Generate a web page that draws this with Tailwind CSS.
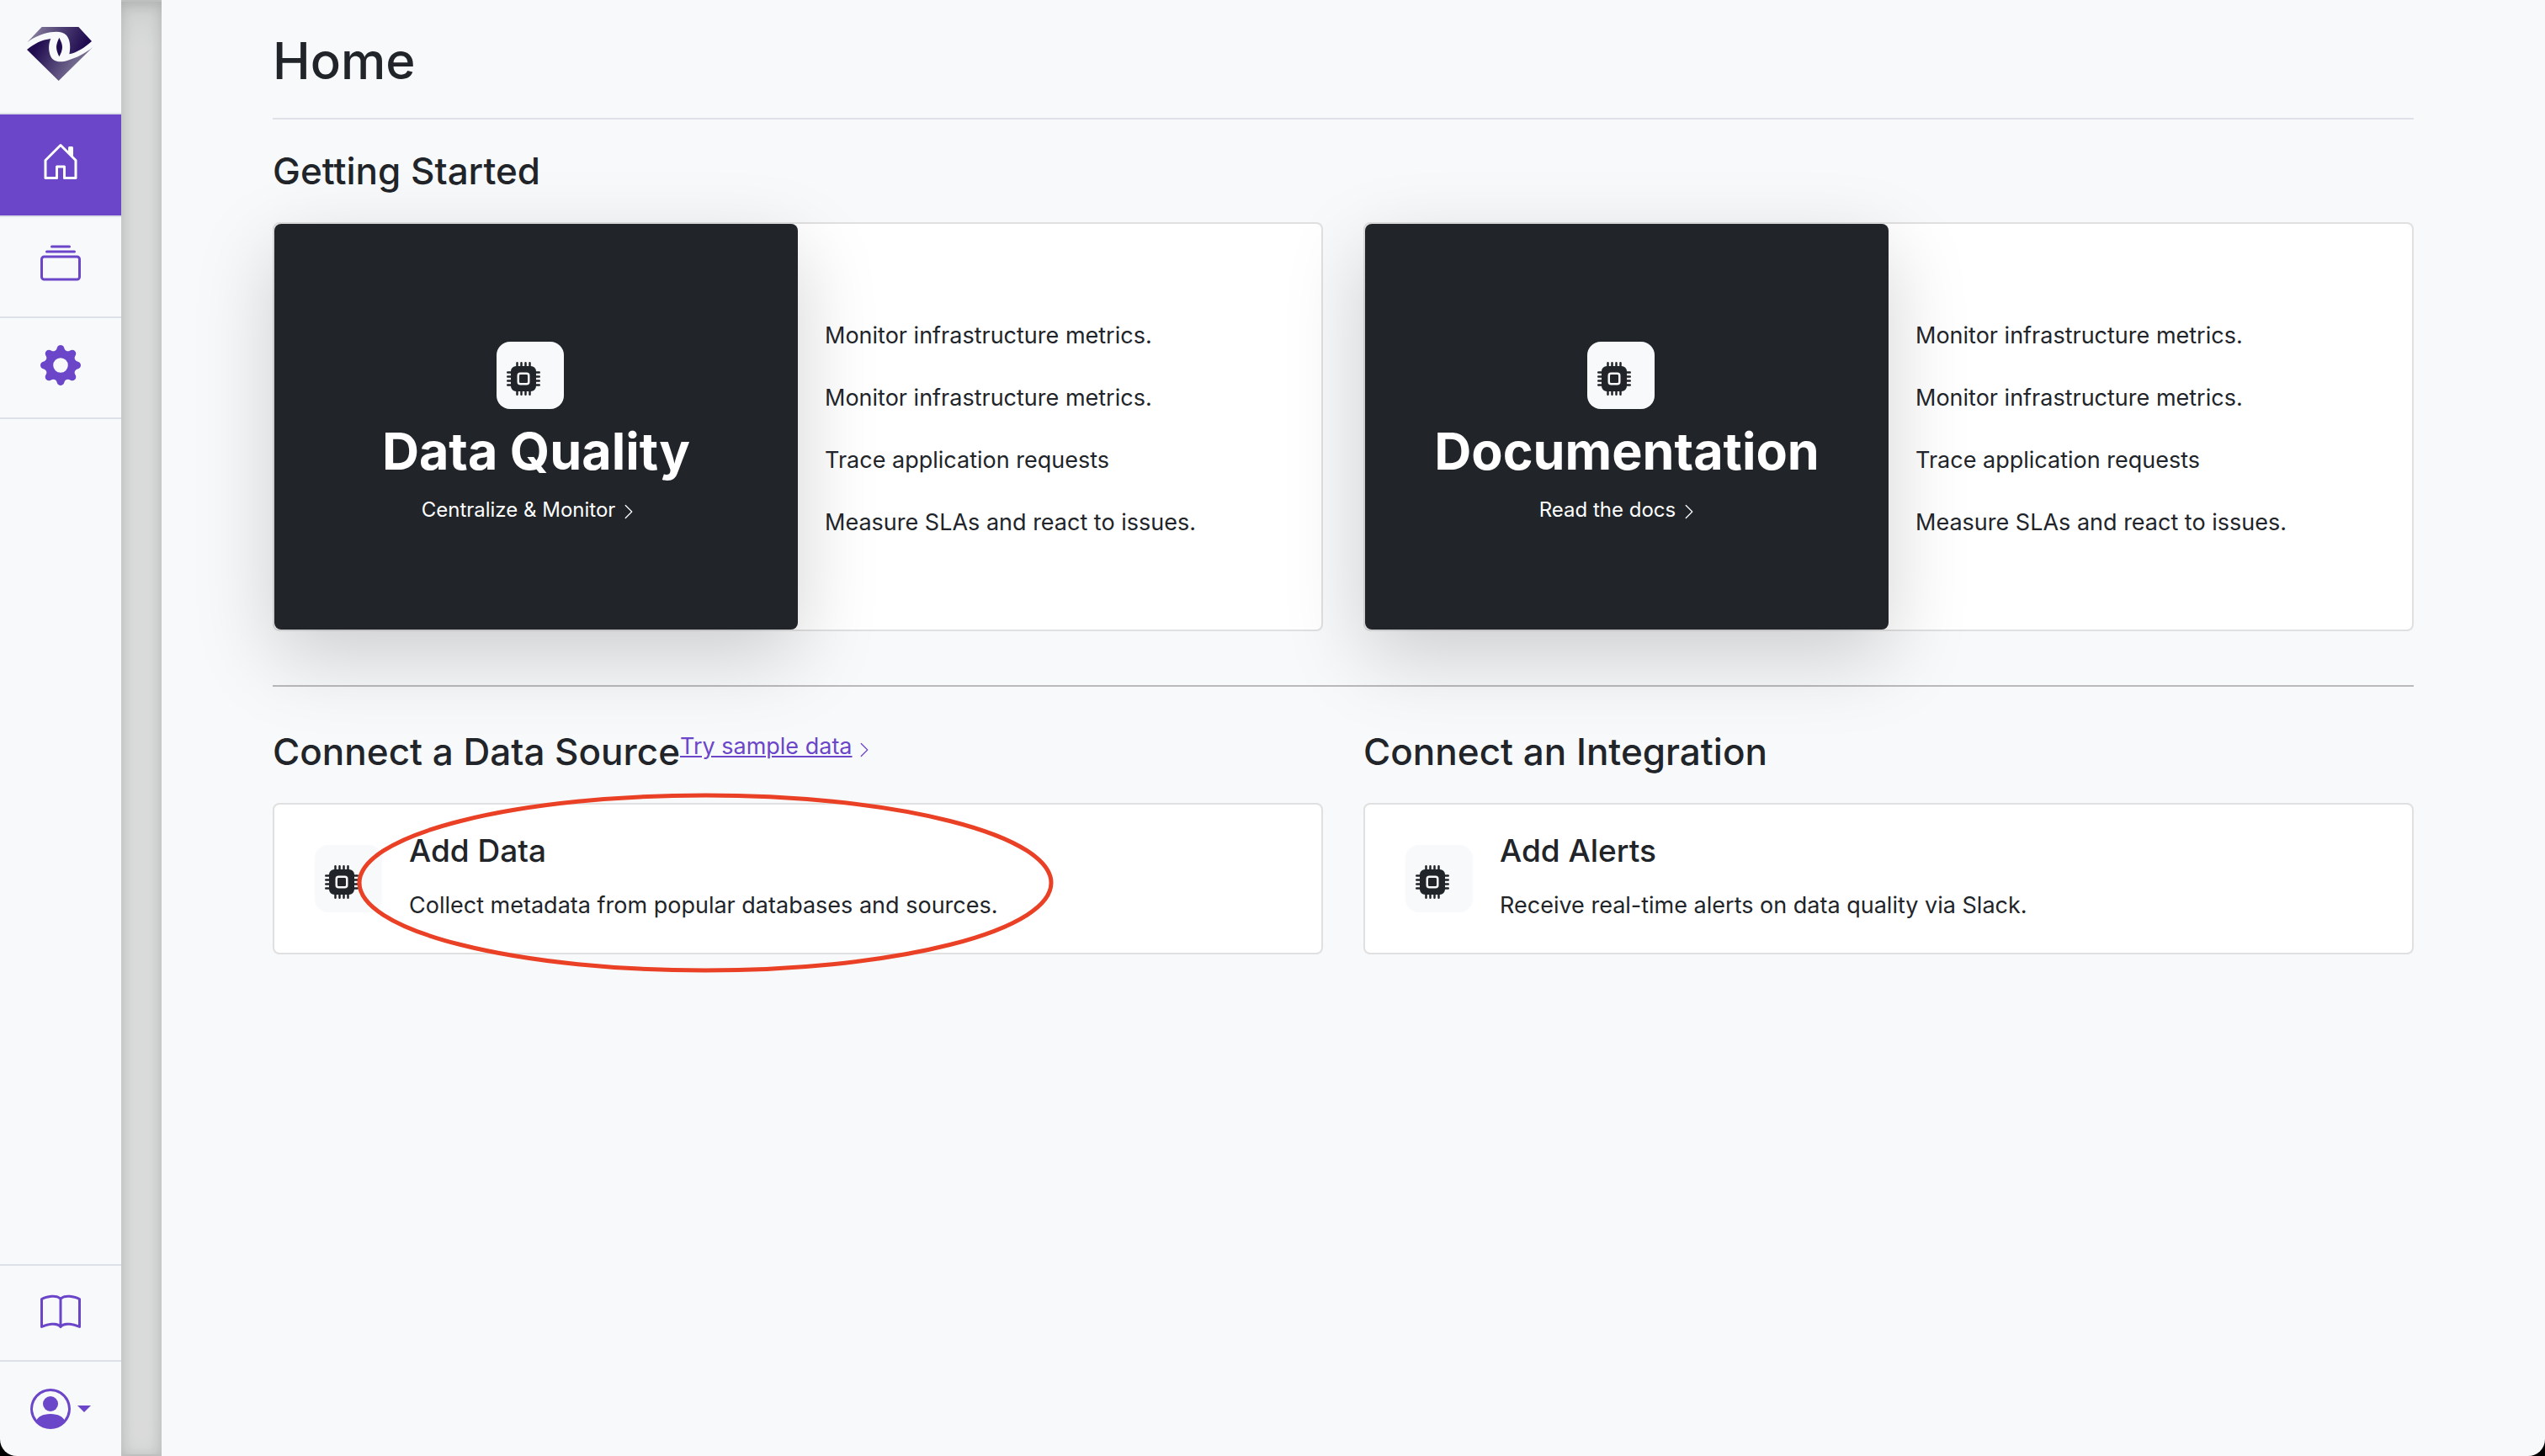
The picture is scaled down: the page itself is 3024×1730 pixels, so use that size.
<!DOCTYPE html>
<html lang="en">
<head>
<meta charset="utf-8">
<title>Home</title>
<script src="https://cdn.jsdelivr.net/npm/@tailwindcss/browser@4"></script>
</head>
<body class="bg-black font-[Inter,sans-serif] text-[#212529]">
<svg class="hidden" aria-hidden="true">
  <symbol id="cpu" viewBox="0 0 16 16"><path d="M6.5 6a.5.5 0 0 0-.5.5v3a.5.5 0 0 0 .5.5h3a.5.5 0 0 0 .5-.5v-3a.5.5 0 0 0-.5-.5h-3z"/><path d="M5.5.5a.5.5 0 0 0-1 0V2A2.500 2.500 0 0 0 2 4.500H.5a.5.5 0 0 0 0 1H2v1H.5a.5.5 0 0 0 0 1H2v1H.5a.5.5 0 0 0 0 1H2v1H.5a.5.5 0 0 0 0 1H2A2.500 2.500 0 0 0 4.500 14v1.500a.5.5 0 0 0 1 0V14h1v1.500a.5.5 0 0 0 1 0V14h1v1.500a.5.5 0 0 0 1 0V14h1v1.500a.5.5 0 0 0 1 0V14a2.500 2.500 0 0 0 2.500-2.500h1.500a.5.5 0 0 0 0-1H14v-1h1.500a.5.5 0 0 0 0-1H14v-1h1.500a.5.5 0 0 0 0-1H14v-1h1.500a.5.5 0 0 0 0-1H14A2.500 2.500 0 0 0 11.500 2V.5a.5.5 0 0 0-1 0V2h-1V.5a.5.5 0 0 0-1 0V2h-1V.5a.5.5 0 0 0-1 0V2h-1V.5zm1 4.500h3A1.500 1.500 0 0 1 11 6.500v3A1.500 1.500 0 0 1 9.500 11h-3A1.500 1.500 0 0 1 5 9.500v-3A1.500 1.500 0 0 1 6.500 5z"/></symbol>
  <symbol id="chevron" viewBox="0 0 16 16"><path fill-rule="evenodd" d="M4.646 1.646a.5.5 0 0 1 .708 0l6 6a.5.5 0 0 1 0 .708l-6 6a.5.5 0 0 1-.708-.708L10.293 8 4.646 2.354a.5.5 0 0 1 0-.708z"/></symbol>
</svg>
<div class="flex min-h-screen overflow-hidden rounded-b-[20px] bg-[#f8f9fb]">
  <aside class="flex w-36 shrink-0 flex-col text-[#6b46c8]">
    <a href="#" aria-label="Home page" class="flex h-[134px] justify-center pt-8">
      <svg class="h-16 w-20" viewBox="96 96 240 192">
        <defs>
          <linearGradient id="gemTop" x1="120" y1="90" x2="300" y2="170" gradientUnits="userSpaceOnUse"><stop offset="0" stop-color="#8a82a0"/><stop offset=".5" stop-color="#4d3f72"/><stop offset="1" stop-color="#1f0a50"/></linearGradient>
          <linearGradient id="gemBottom" x1="130" y1="170" x2="260" y2="240" gradientUnits="userSpaceOnUse"><stop offset="0" stop-color="#210c50"/><stop offset="1" stop-color="#73698f"/></linearGradient>
        </defs>
        <path fill="url(#gemTop)" d="M97 151L149 96H280L327 147C302 170 275 187 247 193C252 170 251 143 237 126C224 112 204 111 180 115C148 120 122 133 97 151Z"/>
        <path fill="url(#gemBottom)" d="M96 177C121 156 149 142 181 138C172 158 172 184 182 203C193 222 217 223 242 215C276 205 304 190 331 168L209 288Z"/>
        <path fill="#210c50" d="M211 134C218 147 222 158 222 168C222 178 218 190 211 202C205 190 201 178 201 168C201 158 205 147 211 134Z"/>
      </svg>
    </a>
    <nav class="flex grow flex-col border-t-2 border-[#dee1e8]">
      <a href="#" aria-label="Home" aria-current="page" class="flex justify-center bg-[#6b46c8] pt-8 pb-10 text-white">
        <svg class="size-12" fill="currentColor" viewBox="0 0 16 16"><path d="M7.646 1.146a.5.5 0 0 1 .708 0l6 6a.5.5 0 0 1 .146.354v7a.5.5 0 0 1-.5.5H9.500a.5.5 0 0 1-.5-.5v-4H7v4a.5.5 0 0 1-.5.5H2a.5.5 0 0 1-.5-.5v-7a.5.5 0 0 1 .146-.354l6-6zM2.500 7.707V14H6v-4a.5.5 0 0 1 .5-.5h3a.5.5 0 0 1 .5.5v4h3.500V7.707L8 2.207l-5.500 5.500z"/><path d="M13 2.500V6l-2-2V2.500a.5.5 0 0 1 .5-.5h1a.5.5 0 0 1 .5.5z"/></svg>
      </a>
      <a href="#" aria-label="Collections" class="flex h-[122px] justify-center border-y-2 border-[#dee1e8] pt-8">
        <svg class="size-12" fill="currentColor" viewBox="0 0 16 16"><path d="M2.500 3.500a.5.5 0 0 1 0-1h11a.5.5 0 0 1 0 1h-11zm2-2a.5.5 0 0 1 0-1h7a.5.5 0 0 1 0 1h-7zM0 13a1.500 1.500 0 0 0 1.500 1.500h13A1.500 1.500 0 0 0 16 13V6a1.500 1.500 0 0 0-1.500-1.500h-13A1.500 1.500 0 0 0 0 6v7zm1.500.5A.5.5 0 0 1 1 13V6a.5.5 0 0 1 .5-.5h13a.5.5 0 0 1 .5.5v7a.5.5 0 0 1-.5.5h-13z"/></svg>
      </a>
      <a href="#" aria-label="Settings" class="flex h-[120px] justify-center border-b-2 border-[#dee1e8] pt-8">
        <svg class="size-12" fill="currentColor" viewBox="0 0 16 16"><path d="M9.405 1.050c-.413-1.400-2.397-1.400-2.810 0l-.1.340a1.464 1.464 0 0 1-2.105.872l-.31-.17c-1.283-.698-2.686.705-1.987 1.987l.169.311c.446.82.023 1.841-.872 2.105l-.34.1c-1.400.413-1.400 2.397 0 2.810l.34.1a1.464 1.464 0 0 1 .872 2.105l-.17.31c-.698 1.283.705 2.686 1.987 1.987l.311-.169a1.464 1.464 0 0 1 2.105.872l.1.34c.413 1.400 2.397 1.400 2.810 0l.1-.34a1.464 1.464 0 0 1 2.105-.872l.31.17c1.283.698 2.686-.705 1.987-1.987l-.169-.311a1.464 1.464 0 0 1 .872-2.105l.34-.1c1.400-.413 1.400-2.397 0-2.810l-.34-.1a1.464 1.464 0 0 1-.872-2.105l.17-.31c.698-1.283-.705-2.686-1.987-1.987l-.311.169a1.464 1.464 0 0 1-2.105-.872l-.1-.34zM8 10.930a2.929 2.929 0 1 1 0-5.860 2.929 2.929 0 0 1 0 5.858z"/></svg>
      </a>
      <a href="#" aria-label="Documentation" class="mt-auto flex justify-center border-y-2 border-[#dee1e8] py-8">
        <svg class="size-12" fill="currentColor" viewBox="0 0 16 16"><path d="M1 2.828c.885-.37 2.154-.769 3.388-.893 1.330-.134 2.458.063 3.112.752v9.746c-.935-.53-2.120-.603-3.213-.493-1.180.12-2.370.461-3.287.811V2.828zm7.500-.141c.654-.689 1.782-.886 3.112-.752 1.234.124 2.503.523 3.388.893v9.923c-.918-.35-2.107-.692-3.287-.81-1.094-.111-2.278-.039-3.213.492V2.687zM8 1.783C7.015.936 5.587.81 4.287.94c-1.514.153-3.042.672-3.994 1.105A.5.5 0 0 0 0 2.500v11a.5.5 0 0 0 .707.455c.882-.4 2.303-.881 3.680-1.020 1.409-.142 2.590.087 3.223.877a.5.5 0 0 0 .78 0c.633-.79 1.814-1.019 3.222-.877 1.378.139 2.800.62 3.681 1.020A.5.5 0 0 0 16 13.500v-11a.5.5 0 0 0-.293-.455c-.952-.433-2.480-.952-3.994-1.105C10.413.809 8.985.936 8 1.783z"/></svg>
      </a>
      <button type="button" aria-label="Account" class="flex items-center justify-center gap-2 py-8">
        <svg class="size-12" fill="currentColor" viewBox="0 0 16 16"><path d="M11 6a3 3 0 1 1-6 0 3 3 0 0 1 6 0z"/><path fill-rule="evenodd" d="M0 8a8 8 0 1 1 16 0A8 8 0 0 1 0 8zm8-7a7 7 0 0 0-5.468 11.370C3.242 11.226 4.805 10 8 10s4.757 1.225 5.468 2.370A7 7 0 0 0 8 1z"/></svg>
        <svg class="h-2 w-4" fill="currentColor" viewBox="0 0 16 8"><path d="M0 0h16L8 8z"/></svg>
      </button>
    </nav>
  </aside>
  <div class="w-12 shrink-0 border-y-2 border-black/15 bg-[#e0e2e1] shadow-[inset_0_16px_48px_rgba(0,0,0,0.1),inset_0_4px_16px_rgba(0,0,0,0.15)]"></div>
  <main class="min-w-0 grow pr-6">
    <div class="mx-auto max-w-[2640px] px-12 pt-8">
      <h1 class="border-b-2 border-[#dee1e8] pb-7 text-[60px] leading-20 font-medium">Home</h1>
      <h2 class="my-8 text-[44px] leading-[58px] font-medium">Getting Started</h2>
      <div class="grid grid-cols-2 gap-12">
        <section class="grid min-h-[486px] grid-cols-2 rounded-lg border-2 border-black/12 bg-white">
          <div class="flex flex-col items-center justify-center rounded-lg bg-[#212529] pt-4 text-white shadow-[0_32px_96px_rgba(0,0,0,0.175)]">
            <div class="mr-3.5 size-20 rounded-2xl bg-[#f8f9fb] pt-6 pl-3 text-[#212529]"><svg class="size-10" fill="currentColor"><use href="#cpu"/></svg></div>
            <h3 class="mt-2.5 text-[61px] leading-20 font-bold">Data Quality</h3>
            <a href="#" class="mt-3 mr-4 flex items-center gap-1.5 text-2xl leading-9">Centralize &amp; Monitor <svg class="mt-1 size-5" fill="currentColor"><use href="#chevron"/></svg></a>
          </div>
          <ul class="flex flex-col justify-center gap-8 px-8 pt-1.5 text-[27px] leading-[42px]">
            <li>Monitor infrastructure metrics.</li>
            <li>Monitor infrastructure metrics.</li>
            <li>Trace application requests</li>
            <li>Measure SLAs and react to issues.</li>
          </ul>
        </section>
        <section class="grid min-h-[486px] grid-cols-2 rounded-lg border-2 border-black/12 bg-white">
          <div class="flex flex-col items-center justify-center rounded-lg bg-[#212529] pt-4 text-white shadow-[0_32px_96px_rgba(0,0,0,0.175)]">
            <div class="mr-3.5 size-20 rounded-2xl bg-[#f8f9fb] pt-6 pl-3 text-[#212529]"><svg class="size-10" fill="currentColor"><use href="#cpu"/></svg></div>
            <h3 class="mt-2.5 text-[61px] leading-20 font-bold">Documentation</h3>
            <a href="#" class="mt-3 mr-5 flex items-center gap-1.5 text-2xl leading-9">Read the docs <svg class="mt-1 size-5" fill="currentColor"><use href="#chevron"/></svg></a>
          </div>
          <ul class="flex flex-col justify-center gap-8 px-8 pt-1.5 text-[27px] leading-[42px]">
            <li>Monitor infrastructure metrics.</li>
            <li>Monitor infrastructure metrics.</li>
            <li>Trace application requests</li>
            <li>Measure SLAs and react to issues.</li>
          </ul>
        </section>
      </div>
      <hr class="mt-16 mb-12 border-t-2 border-black/25">
      <div class="grid grid-cols-2 gap-12">
        <section>
          <div class="mb-8 flex items-start">
            <h2 class="text-[44px] leading-[58px] font-medium">Connect a Data Source</h2>
            <a href="#" class="flex items-center gap-1 text-[27px] leading-[46px] text-[#6b46c8]"><span class="underline">Try sample data</span> <svg class="mt-2 size-5" fill="currentColor"><use href="#chevron"/></svg></a>
          </div>
          <div class="relative flex min-h-[180px] items-center gap-8 rounded-lg border-2 border-black/12 bg-white px-12">
            <div class="size-20 rounded-2xl bg-[#f8f9fb] pt-6 pl-3"><svg class="size-10" fill="currentColor"><use href="#cpu"/></svg></div>
            <div class="pb-1">
              <h3 class="mb-5 text-[37px] leading-[48px] font-medium">Add Data</h3>
              <p class="text-[27px] leading-[42px]">Collect metadata from popular databases and sources.</p>
            </div>
            <svg class="pointer-events-none absolute -top-[14px] left-[98px] h-[214px] w-[828px]" viewBox="0 0 828 214" fill="none" stroke="#ea4025" stroke-width="5"><ellipse cx="414" cy="107" rx="411" ry="104"/></svg>
          </div>
        </section>
        <section>
          <h2 class="mb-8 text-[44px] leading-[58px] font-medium">Connect an Integration</h2>
          <div class="flex min-h-[180px] items-center gap-8 rounded-lg border-2 border-black/12 bg-white px-12">
            <div class="size-20 rounded-2xl bg-[#f8f9fb] pt-6 pl-3"><svg class="size-10" fill="currentColor"><use href="#cpu"/></svg></div>
            <div class="pb-1">
              <h3 class="mb-5 text-[37px] leading-[48px] font-medium">Add Alerts</h3>
              <p class="text-[27px] leading-[42px]">Receive real-time alerts on data quality via Slack.</p>
            </div>
          </div>
        </section>
      </div>
    </div>
  </main>
</div>
</body>
</html>
